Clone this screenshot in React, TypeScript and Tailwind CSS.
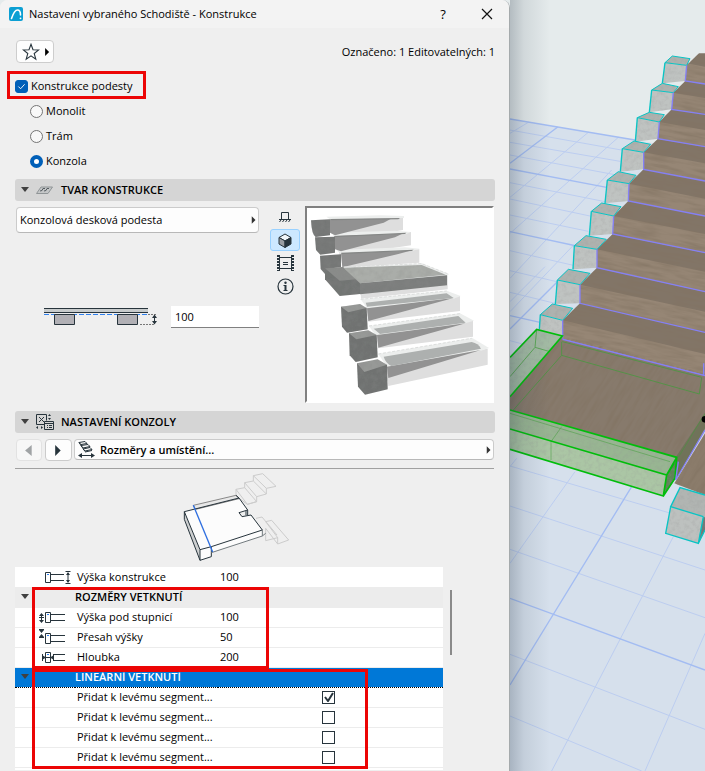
import { useState } from "react";
import type { ReactNode } from "react";

const STRUCTURES = ["Monolit", "Trám", "Konzola"];

const SIZE_ROWS = [
  { icon: "below", label: "Výška pod stupnicí", value: "100" },
  { icon: "above", label: "Přesah výšky", value: "50" },
  { icon: "depth", label: "Hloubka", value: "200" },
];

const STEPS = [
  { top: "480,188 502,168 555,176 545,196", front: "480,188 545,196 541,243 472,250", wood: "545,196 582,160 600,160 600,252 541,243", riser: "545,190 600,200 600,252 541,243", edge: "545,196 541,243 600,252" },
  { top: "440,270 472,250 520,260 505,278", front: "440,270 505,278 500,328 433,337", wood: "505,278 541,243 600,252 600,343 500,328", riser: "505,278 600,294 600,343 500,328", edge: "505,278 500,328 600,343" },
  { top: "397,353 433,337 478,344 463,366", front: "397,353 463,366 459,416 391,425", wood: "463,366 500,328 600,343 600,440 459,416", riser: "463,366 600,390 600,440 459,416", edge: "463,366 459,416 600,440" },
  { top: "352,446 387,423 437,433 416,457", front: "352,446 416,457 416,508 346,515", wood: "416,457 459,416 600,440 600,543 416,508", riser: "416,457 600,490 600,543 416,508", edge: "416,457 416,508 600,543" },
  { top: "307,540 340,515 393,526 372,551", front: "307,540 372,551 370,603 300,610", wood: "372,551 416,508 600,543 600,648 370,603", riser: "372,551 600,596 600,648 370,603", edge: "372,551 370,603 600,648" },
  { top: "259,634 290,609 348,620 326,648", front: "259,634 326,648 323,702 253,707", wood: "326,648 370,603 600,648 600,758 323,702", riser: "326,648 600,702 600,758 323,702", edge: "326,648 323,702 600,758" },
  { top: "208,737 243,707 304,718 276,748", front: "208,737 276,748 276,803 204,808", wood: "276,748 323,702 600,758 600,875 276,803", riser: "276,748 600,815 600,875 276,803", edge: "276,748 276,803 600,875" },
  { top: "157,840 190,808 255,820 225,854", front: "157,840 225,854 225,910 151,912", wood: "225,854 276,803 600,875 600,997 225,910", riser: "225,854 600,935 600,997 225,910", edge: "225,854 225,910 600,997" },
  { top: "106,944 142,912 203,925 173,961", front: "106,944 173,961 173,1018 103,988", wood: "173,961 225,910 600,997 600,1127 173,1018", riser: "173,961 600,1062 600,1127 173,1018", edge: "173,961 173,1018 600,1127" },
];

function Arrow({ dir, className }: { dir: "right" | "left" | "down"; className?: string }) {
  const d = dir === "right" ? "M1 0L6 5L1 10Z" : dir === "left" ? "M6 0L0 5L6 10Z" : "M0 2H8L4 7Z";
  return (
    <svg viewBox="0 0 8 10" className={className ?? "h-2 w-[6px]"} fill="currentColor" aria-hidden="true">
      <path d={d} />
    </svg>
  );
}

function SectionHeader({ icon, children }: { icon: ReactNode; children: ReactNode }) {
  return (
    <h2 className="flex h-[22px] items-center rounded-[3px] bg-[#d5d5d5] pl-[6px] text-[11px] font-semibold">
      <Arrow dir="down" className="h-[10px] w-[8px] text-[#404040]" />
      <span className="ml-[7px] w-[25px]">{icon}</span>
      {children}
    </h2>
  );
}

function RowIcon({ kind }: { kind: string }) {
  return (
    <svg viewBox="0 0 32 16" className="h-4 w-8" fill="none" stroke="#27343c" aria-hidden="true">
      {kind === "height" && (
        <>
          <path d="M6.500 3.500h5v10h-5zM12 5.500h13M12 11.500h13M26.500 2.500h5M26.500 14.500h5M29 4v9" />
          <path d="M27 6l2-3 2 3zM27 11l2 3 2-3z" fill="#27343c" stroke="none" />
        </>
      )}
      {kind === "below" && (
        <>
          <path d="M6.500 3.500h5v10h-5zM12 5.500h14M12 11.500h14M0 8.500h5M2.500 5v8" />
          <path d="M0 7l2.500-3L5 7zM0 11l2.500 3L5 11z" fill="#27343c" stroke="none" />
        </>
      )}
      {kind === "above" && (
        <>
          <path d="M6.500 4.500h5v10h-5zM12 6.500h14M12 12.500h14M0 .5h5M0 8.500h5" />
          <path d="M0 1h5L2.500 4zM0 8h5L2.500 5z" fill="#27343c" stroke="none" />
        </>
      )}
      {kind === "depth" && (
        <>
          <path d="M6.500 3.500h5v10h-5zM15 5.500h11M15 11.500h11M3.500 5v7M14.500 5v7M4 8.500h10" />
          <path d="M3 6l4 2.500L3 11zM15 6l-4 2.500 4 2.500z" fill="#27343c" stroke="none" />
        </>
      )}
      <path d={kind === "above" ? "M8 6.500h2" : "M8 5.500h2"} stroke="#2f80ed" />
    </svg>
  );
}

function PreviewStairs() {
  return (
    <svg viewBox="126 24 555 579" className="h-[193px] w-full bg-white" role="img" aria-label="3D">
      <defs>
        <filter id="speckle" x="0" y="0" width="100%" height="100%">
          <feTurbulence type="fractalNoise" baseFrequency="0.05" numOctaves="3" />
          <feColorMatrix values="0 0 0 0 0.25  0 0 0 0 0.25  0 0 0 0 0.25  0.6 0 0 0 -0.22" />
          <feComposite in2="SourceGraphic" operator="in" />
          <feMerge>
            <feMergeNode in="SourceGraphic" />
            <feMergeNode />
          </feMerge>
        </filter>
      </defs>
      <g fill="#dedede">
        <path d="M195 58L414 52V90L210 124Z" />
        <path d="M208 105L438 96V136L225 168Z" />
        <path d="M228 158L463 148V188L232 203Z" />
        <path d="M285 250L548 226V268L288 296Z" />
        <path d="M302 312L585 288V333L310 365Z" />
        <path d="M330 390L624 362V410L340 445Z" />
        <path d="M362 490L668 446V494L370 558Z" />
      </g>
      <g fill="#eceeed">
        <path d="M184 50L346 46L417 48V54L195 58Z" />
        <path d="M197 98L390 92L438 96L424 102L208 108Z" />
        <path d="M214 150L420 142L464 146L440 153L226 160Z" />
        <path d="M235 202L470 190L552 222L546 228L285 250Z" />
        <path d="M287 298L545 272L587 288L566 296L306 325Z" />
        <path d="M312 378L585 340L627 362L600 370L332 407Z" />
        <path d="M340 462L622 414L672 444L648 452L366 500Z" />
      </g>
      <g fill="#929292">
        <path d="M195 58L378 56L356 68L210 106L195 98Z" />
        <path d="M208 108L412 101L390 112L228 154L210 148Z" />
        <path d="M228 160L436 152L400 162L232 202Z" />
        <path d="M306 325L566 294L310 363Z" />
        <path d="M336 405L602 370L340 443Z" />
        <path d="M366 500L648 450L370 534Z" />
      </g>
      <g fill="#adb0af">
        <path d="M302 308L545 280L566 294L306 320Z" />
        <path d="M326 386L580 348L602 368L345 402Z" />
        <path d="M356 470L620 426Q640 430 648 446L380 498Q362 490 356 470Z" />
      </g>
      <path d="M195 57L405 54L400 58L200 61ZM208 108L424 98L420 102L214 111ZM228 158L446 149L440 153L232 162Z" fill="#858786" />
      <g filter="url(#speckle)">
        <path d="M138 61L195 58V106L152 111Q140 104 138 61Z" fill="#757776" />
        <path d="M150 112L210 110V158L166 164L153 150Z" fill="#757776" />
        <path d="M165 167L228 163V201L180 208V222L167 207Z" fill="#757776" />
        <path d="M180 205L235 202L285 242V282L224 288L180 238Z" fill="#727473" />
        <path d="M180 205L235 202L285 237L224 242Z" fill="#8a8c8a" />
        <path d="M235 203L470 195L542 224L285 250Z" fill="#aaada9" />
        <path d="M285 250L546 226V256L285 283Z" fill="#7c7e7d" />
        <path d="M228 320L305 324L308 388L246 398L231 380Z" fill="#707271" />
        <path d="M228 320L285 312L305 324L250 337Z" fill="#979997" />
        <path d="M252 400L335 405L338 472L272 486L254 466Z" fill="#707271" />
        <path d="M252 400L310 391L335 405L274 418Z" fill="#979997" />
        <path d="M276 490L366 494L368 568L300 584L279 560Z" fill="#707271" />
        <path d="M276 490L338 478L366 494L298 516Z" fill="#979997" />
      </g>
      <g fill="none" stroke="#dcdedd" strokeWidth="3" strokeDasharray="9 5">
        <path d="M236 201L470 191L550 222M287 298L545 273M312 378L585 341M340 462L620 415" />
      </g>
    </svg>
  );
}

function LandingDrawing() {
  return (
    <svg viewBox="45 207 1284 294" className="h-[98px] w-[428px]" fill="none" strokeWidth="3" aria-hidden="true">
      <g stroke="#cccccc">
        <path d="M708 288V268L734 263V248L760 243V227L788 221L828 259L799 265V282L770 290V305L742 313Z" />
        <path d="M708 268L742 313M734 263L770 305M734 248L770 290M760 243L799 282M760 227L799 265M742 313L770 305" />
        <path d="M768 355L786 351L831 405M797 365L815 361L866 420L833 432L797 385M797 365L833 413V432M797 385V422L833 413" />
      </g>
      <path d="M553 335L717 294L743 330V346L738 332L717 338L723 350L753 345L787 390V408L634 458V470L600 481L553 358Z" fill="#fcfcfc" />
      <path d="M553 335L600 449V481L553 358Z" fill="#cdcfd0" />
      <path d="M580 316L708 286L717 296L587 328Z" fill="#e8e8e8" stroke="#888" />
      <path d="M708 286L717 294L743 330V346M743 330L717 338L726 350L753 345L787 390L634 440L600 449L553 335L717 294M738 333V346" stroke="#27343c" />
      <path d="M553 335V358L600 481L634 470V440M600 449V481" stroke="#27343c" />
      <path d="M634 458L787 408V390M787 408L797 400" stroke="#727a7e" />
      <path d="M580 316L638 456" stroke="#2f6fe0" strokeWidth="4" />
    </svg>
  );
}

function Scene() {
  return (
    <svg viewBox="15 0 585 2313" preserveAspectRatio="xMinYMin slice" className="h-full w-full" role="img" aria-label="Schodiště">
      <defs>
        <linearGradient id="shade">
          <stop offset="0" stopColor="#203040" stopOpacity="0.25" />
          <stop offset="0.35" stopColor="#203040" stopOpacity="0.1" />
          <stop offset="1" stopColor="#203040" stopOpacity="0" />
        </linearGradient>
        <filter id="grain" x="0" y="0" width="100%" height="100%">
          <feTurbulence type="fractalNoise" baseFrequency="0.012 0.1" numOctaves="3" seed="4" />
          <feColorMatrix values="0 0 0 0 0.22  0 0 0 0 0.17  0 0 0 0 0.12  1.3 0 0 0 -0.48" />
        </filter>
        <filter id="concrete" x="0" y="0" width="100%" height="100%">
          <feTurbulence type="fractalNoise" baseFrequency="0.08" numOctaves="3" seed="2" />
          <feColorMatrix values="0 0 0 0 0.3  0 0 0 0 0.3  0 0 0 0 0.3  0.6 0 0 0 -0.25" />
          <feComposite in2="SourceGraphic" operator="in" />
          <feMerge>
            <feMergeNode in="SourceGraphic" />
            <feMergeNode />
          </feMerge>
        </filter>
        <clipPath id="treads">
          {STEPS.map((s) => (
            <polygon key={s.wood} points={s.wood} />
          ))}
        </clipPath>
        <clipPath id="floor">
          <path d="M172 1008L600 1120V1285L512 1440V1372L15 1230V1190ZM512 1452L600 1300V1485Z" />
        </clipPath>
      </defs>

      <rect x="15" width="585" height="2313" fill="#e5ebec" />
      <path d="M15 357L600 455V2313H15Z" fill="#d6e0ec" />
      <g fill="none" stroke="#bccdf0" strokeWidth="3">
        <path d="M15 390L360 452M15 427L345 484M15 465L340 526M15 548L300 605M15 597L255 648M15 645L250 694M15 752L205 796M15 812L155 845M15 877L150 910M15 1022L60 1034" />
        <path d="M15 1398L600 1570M15 1518L600 1710M15 1648L600 1853M15 1963L600 2188M15 2148L410 2313" />
        <path d="M70 367L15 400M250 397L15 592M340 412L15 700M320 510L15 835M205 736L15 935M120 800L15 905M210 1415L15 1690M505 1610L140 2313M600 1900L420 2313M35 1375L15 1400" />
      </g>
      <g fill="none" stroke="#a3bcf2" strokeWidth="4">
        <path d="M15 357L390 420M15 507L305 562M15 695L215 738M15 947L105 967M15 1795L600 2010" />
        <path d="M158 381L15 490M157 845L15 987M380 1460L15 2055" />
      </g>

      {STEPS.map((s) => (
        <g key={s.top}>
          <polygon points={s.wood} fill="#827567" />
          <polygon points={s.riser} fill="#968675" />
        </g>
      ))}
      <g clipPath="url(#treads)">
        <rect x="0" y="-100" width="900" height="1400" transform="rotate(11 15 0)" filter="url(#grain)" />
      </g>
      {STEPS.map((s) => (
        <g key={s.edge}>
          <g filter="url(#concrete)">
            <polygon points={s.top} fill="#aeb2af" />
            <polygon points={s.front} fill="#bfc3c1" />
          </g>
          <polygon points={s.top} fill="none" stroke="#08c4c4" strokeWidth="3" />
          <polyline points={s.front.split(" ").filter((_, i) => i === 0 || i === 3).join(" ")} fill="none" stroke="#08c4c4" strokeWidth="4" />
          <polyline points={s.edge} fill="none" stroke="#8580f5" strokeWidth="4" />
        </g>
      ))}

      <path d="M172 1008V1018L600 1127V1285L512 1440V1372L15 1230V1190Z" fill="#877a6c" />
      <path d="M508 1450L600 1300V1485Z" fill="#8b7c6b" />
      <g clipPath="url(#floor)">
        <rect x="-500" y="0" width="1800" height="1400" transform="rotate(-58 300 1250) translate(0 500)" filter="url(#grain)" />
      </g>
      <path d="M173 1018L600 1127" fill="none" stroke="#8580f5" strokeWidth="4" />
      <path d="M512 1372L600 1240V1290L512 1440Z" fill="#667153" opacity="0.7" />

      <g filter="url(#concrete)">
        <path d="M95 988L172 1008L15 1190V1072Z" fill="#a3bba4" />
        <path d="M15 1230L515 1372L485 1425L15 1287Z" fill="#98b592" />
        <path d="M15 1287L485 1425L475 1488L15 1348Z" fill="#abc6a5" />
        <path d="M515 1372L485 1425L475 1488L512 1435Z" fill="#5f8359" />
      </g>
      <g fill="none" stroke="#409d39" strokeWidth="3" opacity="0.7">
        <path d="M172 1025L590 1132L583 1182L170 1066L25 1230M170 1025V1066M95 988L90 1042L135 1055M90 1042L15 1130" />
        <path d="M15 1240L495 1385M170 1280L138 1325V1380M600 1240L520 1372" opacity="0.7" />
      </g>
      <g fill="none" stroke="#00bd0b" strokeWidth="5">
        <path d="M15 1072L95 988L172 1008L15 1190" />
        <path d="M15 1230L515 1372L485 1425L15 1287M15 1348L475 1488L485 1425M475 1488L510 1435L515 1372M485 1425L507 1390" />
      </g>
      <path d="M600 1290L512 1440L520 1385M596 1127V1090" fill="none" stroke="#8580f5" strokeWidth="4" />

      <g filter="url(#concrete)">
        <path d="M497 1520L525 1463L600 1485V1552L595 1550Z" fill="#b1b5b2" />
        <path d="M497 1520L595 1550L580 1630L482 1600Z" fill="#bdc1bf" />
        <path d="M600 1552L595 1550L580 1630L600 1590Z" fill="#747877" />
      </g>
      <path d="M600 1485L525 1463L497 1520L595 1550M497 1520L482 1600L580 1630L595 1550M580 1630L600 1590" fill="none" stroke="#08c4c4" strokeWidth="4" />
      <circle cx="600" cy="1258" r="10" fill="#000" />
      <rect x="15" width="120" height="2313" fill="url(#shade)" />
    </svg>
  );
}

function GridCheckbox({ label, checked, onChange }: { label: string; checked: boolean; onChange: () => void }) {
  return (
    <span className="grid size-[13px] place-items-center">
      <input
        type="checkbox"
        aria-label={label}
        checked={checked}
        onChange={onChange}
        className="col-start-1 row-start-1 size-[13px] appearance-none border border-[#27343c] bg-white"
      />
      {checked && (
        <svg viewBox="0 0 10 10" className="pointer-events-none z-10 col-start-1 row-start-1 size-[10px]" fill="none" stroke="#27343c" strokeWidth="2">
          <path d="M1 5l3 4 5-8" />
        </svg>
      )}
    </span>
  );
}

export default function App() {
  const [enabled, setEnabled] = useState(true);
  const [structure, setStructure] = useState("Konzola");
  const [height, setHeight] = useState("100");
  const [segments, setSegments] = useState([true, false, false, false]);

  function toggleSegment(index: number) {
    setSegments(segments.map((on, i) => (i === index ? !on : on)));
  }

  return (
    <div className="grid h-screen grid-cols-[34fr_13fr] overflow-hidden bg-[#e5ebec] font-['Open_Sans','Noto_Sans',sans-serif] text-[11px] leading-4 text-black">
      <main className="min-w-0 overflow-hidden rounded-t-lg border-r border-[#a5aaac] bg-[#efefef]">
        <header className="flex h-[28px] items-center bg-[#f3f3f3] pl-[9px]">
          <svg viewBox="0 0 14 14" className="size-[14px]" aria-hidden="true">
            <rect width="14" height="14" rx="2" fill="#0c9fd3" />
            <path d="M2.500 11.500C4 7 6 3 8.500 3C10.500 3 11.500 5 11.500 8" fill="none" stroke="#fff" strokeWidth="1.600" strokeLinecap="round" />
            <circle cx="11.500" cy="11.300" r="0.900" fill="#fff" />
          </svg>
          <h1 className="ml-[6px] flex-1">Nastavení vybraného Schodiště - Konstrukce</h1>
          <button type="button" className="w-11 text-center text-[13px]">?</button>
          <button type="button" aria-label="Zavřít" className="flex w-11 justify-center">
            <svg viewBox="0 0 12 12" className="size-[12px]" stroke="#111" strokeWidth="1.200">
              <path d="M1 1l10 10M11 1L1 11" />
            </svg>
          </button>
        </header>

        <div className="pl-[15px] pr-[14px]">
          <div className="flex items-center justify-between pl-px pt-3">
            <button type="button" aria-label="Oblíbené" className="flex h-[23px] w-[38px] items-center rounded-[4px] border border-[#cdcdcd] bg-[#fdfdfd] pl-[5px]">
              <svg viewBox="0 0 18 18" className="size-[18px]" fill="none" stroke="#27343c" strokeWidth="1.100">
                <path d="M9 1.300l2 5.400 5.700.2-4.500 3.600 1.600 5.600L9 12.900l-4.800 3.200 1.600-5.600L1.300 6.900l5.700-.2z" />
              </svg>
              <Arrow dir="right" className="ml-1 h-[8px] w-[7px]" />
            </button>
            <p>Označeno: 1 Editovatelných: 1</p>
          </div>

          <div className="relative mt-[15px]">
            <label className="flex h-4 w-fit items-center gap-[3px]">
              <span className="grid size-[13px] place-items-center">
                <input
                  type="checkbox"
                  checked={enabled}
                  onChange={() => setEnabled(!enabled)}
                  className="col-start-1 row-start-1 size-[13px] appearance-none rounded-[3px] border border-[#005fb8] bg-white checked:bg-[#005fb8]"
                />
                <svg viewBox="0 0 10 10" className="pointer-events-none z-10 col-start-1 row-start-1 size-[9px]" fill="none" stroke="#fff">
                  <path d="M1.500 5l2.500 2.500 4.500-5" />
                </svg>
              </span>
              Konstrukce podesty
            </label>
            <div className="pointer-events-none absolute -left-2 -top-[7px] h-[28px] w-[139px] border-[3px] border-[#ec0505]" />
          </div>

          <fieldset className="mt-[9px] flex flex-col gap-[9px] pl-[15px]">
            {STRUCTURES.map((name) => (
              <label key={name} className="flex h-4 w-fit items-center gap-[3px]">
                <input
                  type="radio"
                  name="structure"
                  checked={structure === name}
                  onChange={() => setStructure(name)}
                  className="size-[13px] appearance-none rounded-full border border-[#757575] bg-[#f8f8f8] checked:border-4 checked:border-[#005fb8] checked:bg-white"
                />
                {name}
              </label>
            ))}
          </fieldset>

          <section className="mt-[10px]">
            <SectionHeader
              icon={
                <svg viewBox="0 0 17 8" className="h-2 w-[17px]" fill="none" stroke="#7e8487">
                  <path d="M.5 7.500L5 1h11.500L12 7.500z" fill="#c4c6c7" stroke="#909597" />
                  <path d="M4 5l2-.5 1-2h2M8 5l2-.5 1-2h2" stroke="#555c60" />
                </svg>
              }
            >
              TVAR KONSTRUKCE
            </SectionHeader>
            <div className="mt-[5px] flex">
              <div className="flex-1 pl-px pt-px">
                <div className="relative">
                  <select aria-label="Tvar konstrukce" className="block h-[26px] w-full appearance-none rounded-[4px] border border-[#cbcbcb] border-b-[#b8b8b8] bg-[#fdfdfd] pl-[3px]">
                    <option>Konzolová desková podesta</option>
                  </select>
                  <Arrow dir="right" className="pointer-events-none absolute right-[2px] top-[9px] h-[8px] w-[6px] text-[#333]" />
                </div>
                <div className="mt-[72px] flex items-start justify-between pl-[27px]">
                  <svg viewBox="0 0 116 22" className="h-[22px] w-[116px]" fill="none" aria-hidden="true">
                    <path d="M1 3h104v4H1z" fill="#c7cbcc" />
                    <path d="M1 3.500h104M1 7.500h104" stroke="#27343c" />
                    <path d="M1 9.500h104" stroke="#2f80ed" strokeDasharray="5 2" />
                    <path d="M11.500 9.500h20v10h-20zM74.500 9.500h20v10h-20z" fill="#b1b0b5" stroke="#27343c" />
                    <path d="M105 9.500h8M97 19.500h14" stroke="#777" strokeDasharray="2 1" />
                    <path d="M111.500 11v7" stroke="#27343c" />
                    <path d="M109 13l2.500-3.500L114 13zM109 16l2.500 3.500L114 16z" fill="#27343c" />
                  </svg>
                  <input
                    aria-label="Výška"
                    value={height}
                    onChange={(e) => setHeight(e.target.value)}
                    className="mt-px h-[22px] w-[88px] border-b border-[#808080] bg-white pl-[4px]"
                  />
                </div>
              </div>
              <div className="ml-[11px] flex w-[30px] flex-col gap-px">
                <button type="button" aria-label="Půdorys" className="grid h-[22px] place-items-center">
                  <svg viewBox="0 0 12 12" className="size-[12px]" fill="none" stroke="#27343c">
                    <path d="M2.500 8V1.500h7V8M0 8.500h12" />
                    <path d="M2 9l-1.500 2M5 9l-1.500 2M8 9l-1.500 2M11 9l-1.500 2" />
                  </svg>
                </button>
                <button type="button" aria-label="3D náhled" className="grid h-[22px] place-items-center rounded-[3px] border border-[#99d1ff] bg-[#cce8ff]">
                  <svg viewBox="0 0 14 15" className="h-[15px] w-[14px]" stroke="#27343c" strokeLinejoin="round">
                    <path d="M7 1l6 3.500-6 3.500-6-3.500z" fill="#f0f5f8" />
                    <path d="M1 4.500L7 8v6.500L1 11z" fill="#9a9ea3" />
                    <path d="M13 4.500L7 8v6.500l6-3.500z" fill="#27343c" />
                  </svg>
                </button>
                <button type="button" aria-label="Film" className="grid h-[22px] place-items-center">
                  <svg viewBox="0 0 17 16" className="h-4 w-[17px]" fill="none" stroke="#27343c">
                    <path d="M2.500 0v16M14.500 0v16M3 2.500h11M3 13.500h11M6 7.500h5M6 9.500h5" />
                    <path d="M1 0v16M16 0v16" strokeDasharray="2 1" strokeWidth="2" />
                  </svg>
                </button>
                <button type="button" aria-label="Informace" className="grid h-[22px] place-items-center">
                  <svg viewBox="0 0 17 17" className="size-[17px]" fill="none" stroke="#27343c">
                    <circle cx="8.500" cy="8.500" r="7.500" strokeWidth="1.200" />
                    <path d="M6.500 7.500h2V12M6.500 12.500h4" />
                    <path d="M8.500 7v5" strokeWidth="2" />
                    <circle cx="8.500" cy="4.800" r="1.200" fill="#27343c" stroke="none" />
                  </svg>
                </button>
              </div>
              <div className="ml-[5px] mr-px w-[189px] border-2 border-b-white border-l-[#808080] border-r-white border-t-[#808080]">
                <PreviewStairs />
              </div>
            </div>
          </section>

          <section className="mt-2">
            <SectionHeader
              icon={
                <svg viewBox="0 0 18 16" className="h-4 w-[18px]" fill="none" stroke="#27343c">
                  <path d="M8 10.500H.5v-10h10v6M3 3l5 5M8 3L3 8" />
                  <path d="M8.500 7.500h9v8h-9zM9 9.500h8M11 11.500h1M13 11.500h3M11 13.500h1M13 13.500h3" />
                  <path d="M12 2l1.500-2L15 2zM12 4l1.500 2L15 4zM2 12L0 13.500 2 15zM5 12l2 1.500L5 15z" fill="#27343c" stroke="none" />
                </svg>
              }
            >
              NASTAVENÍ KONZOLY
            </SectionHeader>
            <div className="mt-[6px] flex h-[22px] pl-px pr-px">
              <button type="button" aria-label="Předchozí" className="grid w-[26px] place-items-center rounded-[4px] border border-[#e2e2e2] bg-[#f7f7f7] text-[#a0a3a5]">
                <Arrow dir="left" className="h-[11px] w-[9px]" />
              </button>
              <button type="button" aria-label="Další" className="ml-[3px] grid w-[27px] place-items-center rounded-[4px] border border-[#cbcbcb] bg-[#fdfdfd] text-[#27343c]">
                <Arrow dir="right" className="h-[11px] w-[9px]" />
              </button>
              <div className="relative ml-[2px] flex-1">
                <select aria-label="Stránka nastavení" className="block h-[21px] w-full appearance-none rounded-[4px] border border-[#cbcbcb] border-b-[#b8b8b8] bg-[#fdfdfd] pl-[25px] font-semibold">
                  <option>Rozměry a umístění...</option>
                </select>
                <svg viewBox="0 0 17 17" className="pointer-events-none absolute left-[4px] top-[2px] size-[17px]" fill="none" stroke="#27343c">
                  <path d="M1 1.500l6-1 2 2-6 1zM3 4.500l7-1 2 2-7 1.500zM5 8l7-1.500 2 2-7 1.500zM7 11l7-1.500M1 1.500l6 9" />
                  <path d="M2 14.500h13" />
                  <path d="M4 12l-4 2.500L4 17zM13 12l4 2.500-4 2.500z" fill="#27343c" stroke="none" />
                </svg>
                <Arrow dir="right" className="pointer-events-none absolute right-[2px] top-[7px] h-[8px] w-[6px] text-[#333]" />
              </div>
            </div>
            <hr className="mr-px mt-[7px] border-[#a0a0a0]" />
            <LandingDrawing />
            <div className="flex gap-[7px] pr-[43px]">
              <div className="relative flex-1 bg-white pb-[2px]">
                <table className="w-full table-fixed border-collapse">
                  <colgroup>
                    <col className="w-[60px]" />
                    <col className="w-[143px]" />
                    <col />
                  </colgroup>
                  <tbody>
                    <tr className="h-[20px] border-b border-[#ececec]">
                      <td className="p-0 pl-6"><RowIcon kind="height" /></td>
                      <td className="p-0 pl-[2px]">Výška konstrukce</td>
                      <td className="p-0 pl-[2px]">100</td>
                    </tr>
                    <tr className="h-[20px] border-b border-[#ececec] bg-[#ececec]">
                      <td className="p-0 pl-[6px]"><Arrow dir="down" className="h-[10px] w-[8px] text-[#404040]" /></td>
                      <th colSpan={2} className="p-0 text-left font-semibold">ROZMĚRY VETKNUTÍ</th>
                    </tr>
                    {SIZE_ROWS.map((row) => (
                      <tr key={row.label} className="h-[20px] border-b border-[#ececec]">
                        <td className="p-0 pl-6"><RowIcon kind={row.icon} /></td>
                        <td className="p-0 pl-[2px]">{row.label}</td>
                        <td className="p-0 pl-[2px]">{row.value}</td>
                      </tr>
                    ))}
                    <tr className="h-[20px] border-b border-dotted border-black bg-[#0078d7] text-white">
                      <td className="p-0 pl-[6px]"><Arrow dir="down" className="h-[10px] w-[8px] text-[#404040]" /></td>
                      <th colSpan={2} className="p-0 text-left font-semibold">LINEÁRNÍ VETKNUTÍ</th>
                    </tr>
                    {segments.map((on, i) => (
                      <tr key={i} className="h-[20px] border-b border-[#ececec]">
                        <td className="p-0" />
                        <td className="whitespace-nowrap p-0 pl-[2px]">Přidat k levému segment...</td>
                        <td className="p-0 pl-[104px]">
                          <GridCheckbox label={`Přidat k levému segmentu ${i + 1}`} checked={on} onChange={() => toggleSegment(i)} />
                        </td>
                      </tr>
                    ))}
                  </tbody>
                </table>
                <div className="pointer-events-none absolute left-[17px] top-[20px] h-[82px] w-[237px] border-[3px] border-[#ec0505]" />
                <div className="pointer-events-none absolute left-[17px] top-[102px] h-[100px] w-[336px] border-[3px] border-[#ec0505]" />
              </div>
              <div className="mt-[23px] h-[65px] w-[2px] bg-[#8a8a8a]" />
            </div>
          </section>
        </div>
      </main>
      <aside className="min-w-0 overflow-hidden">
        <Scene />
      </aside>
    </div>
  );
}
